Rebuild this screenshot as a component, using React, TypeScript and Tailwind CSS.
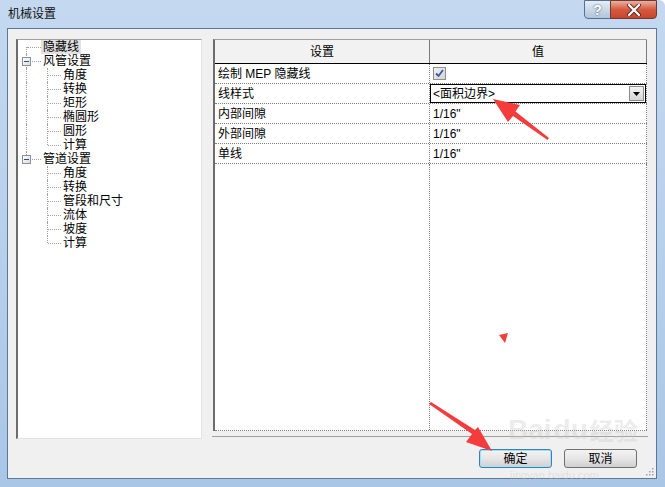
import React from 'react'

type Kind = 'first' | 'tee' | 'last' | 'pipe' | 'blank'

type TreeRow = { label: string; cells: Kind[]; box?: boolean; selected?: boolean }

const rows: TreeRow[] = [
  { label: '隐藏线', cells: ['first'], selected: true },
  { label: '风管设置', cells: ['tee'], box: true },
  { label: '角度', cells: ['pipe', 'tee'] },
  { label: '转换', cells: ['pipe', 'tee'] },
  { label: '矩形', cells: ['pipe', 'tee'] },
  { label: '椭圆形', cells: ['pipe', 'tee'] },
  { label: '圆形', cells: ['pipe', 'tee'] },
  { label: '计算', cells: ['pipe', 'last'] },
  { label: '管道设置', cells: ['last'], box: true },
  { label: '角度', cells: ['blank', 'tee'] },
  { label: '转换', cells: ['blank', 'tee'] },
  { label: '管段和尺寸', cells: ['blank', 'tee'] },
  { label: '流体', cells: ['blank', 'tee'] },
  { label: '坡度', cells: ['blank', 'tee'] },
  { label: '计算', cells: ['blank', 'last'] },
]

function Cell({ kind, root, box }: { kind: Kind; root: boolean; box?: boolean }) {
  const w = root ? 'w-[23px]' : 'w-[20px]'
  const vx = root ? 'left-[8px]' : 'left-[6px]'
  const hx = root ? 'left-[9px]' : 'left-[7px]'
  return (
    <div className={`relative h-[14px] shrink-0 ${w}`}>
      {kind === 'first' && <span className={`absolute top-[7px] bottom-0 ${vx} border-l border-dotted border-[#a0a0a0]`} />}
      {(kind === 'tee' || kind === 'pipe') && <span className={`absolute top-0 bottom-0 ${vx} border-l border-dotted border-[#a0a0a0]`} />}
      {kind === 'last' && <span className={`absolute top-0 h-[7px] ${vx} border-l border-dotted border-[#a0a0a0]`} />}
      {kind !== 'pipe' && kind !== 'blank' && (
        <span className={`absolute top-[7px] right-0 ${hx} border-t border-dotted border-[#a0a0a0]`} />
      )}
      {box && (
        <span className="absolute left-[4px] top-[3px] flex h-[9px] w-[9px] items-center justify-center border border-[#8e8f8f] bg-gradient-to-br from-white to-[#d8dce4]">
          <span className="h-px w-[5px] bg-[#2b4f8c]" />
        </span>
      )}
    </div>
  )
}

function Tree() {
  return (
    <div className="h-[400px] w-[186px] shrink-0 border-t border-l-2 border-r border-b border-t-[#a0a0a0] border-l-[#6d6d6d] border-r-[#e3e3e3] border-b-[#e3e3e3] bg-white">
      {rows.map((r, i) => (
        <div key={i} className="flex h-[14px] items-center">
          {r.cells.map((c, j) => (
            <Cell key={j} kind={c} root={j === 0} box={r.box && j === 0} />
          ))}
          <span className={`px-[2px] leading-[14px] whitespace-nowrap ${r.selected ? 'bg-[#e1e1e1]' : ''}`}>{r.label}</span>
        </div>
      ))}
    </div>
  )
}

function Checkbox() {
  return (
    <span className="ml-[3px] flex h-[13px] w-[13px] items-center justify-center border border-[#8f8f8f] bg-gradient-to-br from-[#f0f0f0] to-[#d4d4d4]">
      <svg width="9" height="9" viewBox="0 0 9 9">
        <path d="M1 4.5 L3.5 7 L8 1" fill="none" stroke="#3b58a6" strokeWidth="1.8" />
      </svg>
    </span>
  )
}

function Dropdown() {
  return (
    <div className="flex h-[19px] w-full items-center border border-black bg-white">
      <span className="pl-[2px] leading-[14px]">&lt;面积边界&gt;</span>
      <span className="ml-auto mr-px flex h-[15px] w-[15px] items-center justify-center border border-[#8a8a8a] bg-gradient-to-b from-[#f4f4f4] to-[#d6d6d6]">
        <svg width="7" height="4" viewBox="0 0 7 4">
          <path d="M0 0 H7 L3.5 4 Z" fill="#000" />
        </svg>
      </span>
    </div>
  )
}

const tableRows: { name: string; value: React.ReactNode }[] = [
  { name: '绘制 MEP 隐藏线', value: <Checkbox /> },
  { name: '线样式', value: <Dropdown /> },
  { name: '内部间隙', value: <span className="pl-[3px]">1/16"</span> },
  { name: '外部间隙', value: <span className="pl-[3px]">1/16"</span> },
  { name: '单线', value: <span className="pl-[3px]">1/16"</span> },
]

function Table() {
  return (
    <div className="ml-[10px] flex w-[436px] flex-col">
      <div className="ml-px flex h-[392px] w-[434px] flex-col border-t border-l-2 border-t-[#a0a0a0] border-l-[#6d6d6d] bg-white">
        <div className="flex h-[24px] shrink-0 border-b border-black bg-[#f2f2f2]">
          <div className="flex w-[215px] items-center justify-center border-r border-[#7a7a7a]">设置</div>
          <div className="flex flex-1 items-center justify-center border-r border-[#7a7a7a]">值</div>
        </div>
        {tableRows.map((r, i) => (
          <div key={i} className="flex h-[20px] shrink-0 border-b border-dotted border-[#808080]">
            <div className="flex w-[215px] items-center border-r border-dotted border-[#808080] pl-[3px] whitespace-nowrap">{r.name}</div>
            <div className="flex flex-1 items-center border-r border-dotted border-[#808080]">{r.value}</div>
          </div>
        ))}
        <div className="flex flex-1 border-b border-dotted border-[#808080]">
          <div className="w-[215px] border-r border-dotted border-[#808080]" />
          <div className="flex-1 border-r border-dotted border-[#808080]" />
        </div>
      </div>
      <div className="mt-[5px] h-px w-[436px] bg-[#a0a0a0]" />
    </div>
  )
}

function Button({ label, primary }: { label: string; primary?: boolean }) {
  return (
    <button
      className={`flex h-[19px] w-[73px] items-center justify-center rounded-[3px] border bg-gradient-to-b from-[#f3f3f3] via-[#e6e6e6] to-[#d0d0d0] leading-[14px] ${
        primary ? 'border-[#3c7fb1] shadow-[inset_0_0_0_1px_#9fe1f9]' : 'border-[#707070]'
      }`}
    >
      {label}
    </button>
  )
}

export default function App() {
  return (
    <div className="relative h-[487px] w-[665px] overflow-hidden rounded-tr-[6px] bg-gradient-to-b from-[#c4d9f0] to-[#a9c6e7] font-['Liberation_Sans','Noto_Sans_CJK_SC',sans-serif] text-[12px] text-black">
      <div className="flex h-[28px] items-start">
        <div className="pl-[8px] pt-[6px] leading-[16px] text-[#111]">机械设置</div>
        <div className="ml-auto mr-[8px] flex">
          <div className="flex h-[19px] w-[27px] items-center justify-center rounded-bl-[4px] border border-[#56708f] bg-gradient-to-b from-[#e6eef7] via-[#cbd8e7] to-[#b2c5db] text-[14px] font-bold leading-none text-white [text-shadow:0_0_2px_#2c3e55]">
            ?
          </div>
          <div className="-ml-px flex h-[19px] w-[47px] items-center justify-center rounded-br-[4px] border border-[#6b3a33] bg-gradient-to-b from-[#eab0a2] via-[#d4593f] to-[#c9452c]">
            <svg width="14" height="12" viewBox="0 0 14 12">
              <path d="M2 1 L12 11 M12 1 L2 11" stroke="#5b2a22" strokeWidth="4" strokeLinecap="round" />
              <path d="M2 1 L12 11 M12 1 L2 11" stroke="#fff" strokeWidth="2.2" strokeLinecap="round" />
            </svg>
          </div>
        </div>
      </div>

      <div className="relative mx-[7px] flex h-[451px] w-[650px] flex-col border border-[#5d7895] bg-[#f0f0f0] pl-[8px] pt-[10px]">
        <div className="flex">
          <Tree />
          <Table />
        </div>
        <div className="mt-[10px] flex justify-end gap-[12px] pr-[19px]">
          <Button label="确定" primary />
          <Button label="取消" />
        </div>
        <svg className="absolute right-[2px] bottom-[2px]" width="10" height="10" viewBox="0 0 10 10">
          <g fill="#a0a0a0">
            <rect x="8" y="2" width="1.5" height="1.5" />
            <rect x="5" y="5" width="1.5" height="1.5" />
            <rect x="8" y="5" width="1.5" height="1.5" />
            <rect x="2" y="8" width="1.5" height="1.5" />
            <rect x="5" y="8" width="1.5" height="1.5" />
            <rect x="8" y="8" width="1.5" height="1.5" />
          </g>
        </svg>
      </div>

      <div className="pointer-events-none absolute left-[508px] top-[416px] flex items-end gap-[2px] text-[28px] font-bold leading-none text-[rgba(200,200,200,0.35)]">
        <span>Bai</span>
        <span>du</span>
        <span className="text-[24px]">经验</span>
      </div>
      <div className="pointer-events-none absolute left-[510px] top-[470px] text-[11px] leading-none text-[rgba(200,200,200,0.4)]">
        jingyan.baidu.com
      </div>

      <svg className="pointer-events-none absolute inset-0" width="665" height="487" viewBox="0 0 665 487">
        <g fill="#f43c3c">
          <polygon points="493,99 520,105 515.5,111.5 549,138 547.5,140 513,116 508,122" />
          <polygon points="492,451 466,442 472,434 429,404 431,402 475,430 478,427" />
          <polygon points="499,335 508,333 505,343" />
        </g>
      </svg>
    </div>
  )
}
